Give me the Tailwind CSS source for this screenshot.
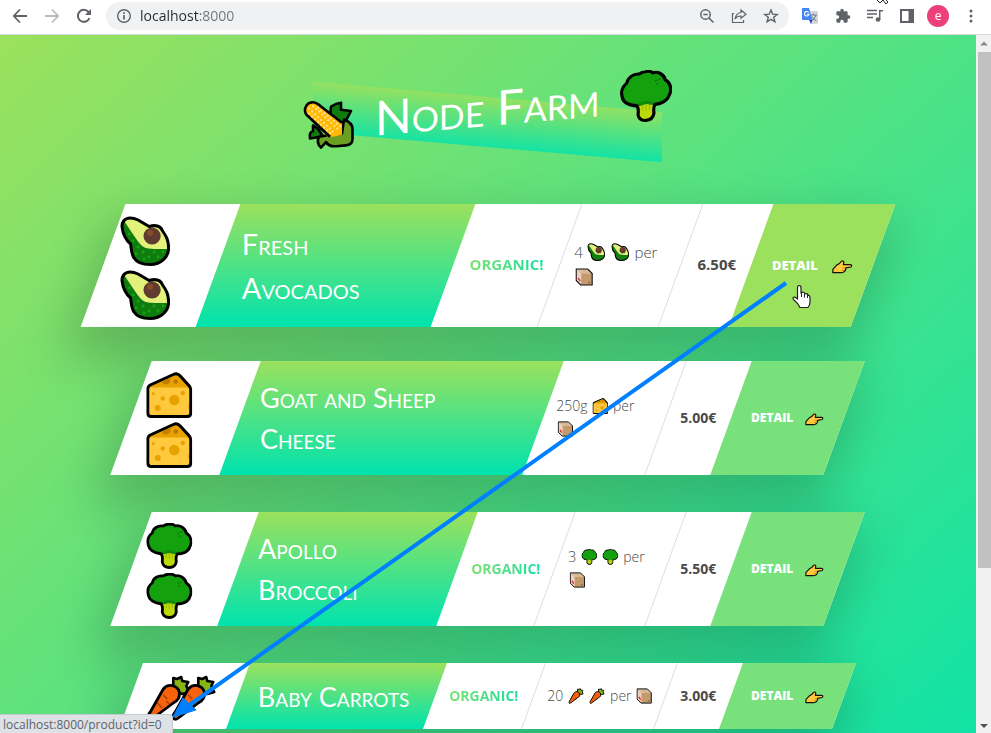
<!DOCTYPE html>
<html lang="en">
<head>
<meta charset="utf-8">
<meta name="viewport" content="width=device-width, initial-scale=1">
<title>Node Farm</title>
<script src="https://cdn.jsdelivr.net/npm/@tailwindcss/browser@4"></script>
</head>
<body class="relative flex h-screen flex-col overflow-hidden bg-white font-['Open_Sans',sans-serif] text-[#4a4a4a]">

<!-- Emoji artwork -->
<svg class="hidden" aria-hidden="true">
  <symbol id="avocado" viewBox="0 0 50 50">
    <path d="M10 2C4 2 1.500 7 2 11C3 20 7 25 10.500 28C11 30 11 38 14 42C17 47 23 48.500 30 48.500C41 48.500 48.500 41 48.500 32C48.500 24 46 20 42.500 15C40 9 34 9 29 10.500L18 4C15 2.500 13 2 10 2Z" fill="#e2f179"/>
    <path d="M4 5C11 15 17 25 21 29C25 33 28 33 48.500 33C48 42 41 48.500 30 48.500C23 48.500 17 47 14 42C11 38 11 30 10.500 28C7 25 3 20 2 11Z" fill="#107c10"/>
    <g fill="#16a70f"><circle cx="9" cy="18" r="1.400"/><circle cx="13" cy="25" r="1.400"/><circle cx="18" cy="31" r="1.400"/><circle cx="16" cy="38" r="1.400"/><circle cx="23" cy="36" r="1.400"/><circle cx="29" cy="41" r="1.400"/><circle cx="34" cy="36" r="1.400"/><circle cx="38" cy="41" r="1.400"/><circle cx="43" cy="36" r="1.400"/><circle cx="24" cy="43" r="1.400"/></g>
    <circle cx="32" cy="20" r="8.600" fill="#603b2f"/><circle cx="30" cy="17" r="3" fill="#8a4b25"/>
    <path d="M10 2C4 2 1.500 7 2 11C3 20 7 25 10.500 28C11 30 11 38 14 42C17 47 23 48.500 30 48.500C41 48.500 48.500 41 48.500 32C48.500 24 46 20 42.500 15C40 9 34 9 29 10.500L18 4C15 2.500 13 2 10 2Z" fill="none" stroke="#000" stroke-width="3" stroke-linejoin="round"/>
  </symbol>
  <symbol id="cheese" viewBox="0 0 46 46">
    <path d="M1.500 17Q1.500 14.500 4 13L27 2.500Q31 .500 34 4L43 14Q44.500 16 44.500 18V41Q44.500 44.500 41 44.500H5Q1.500 44.500 1.500 41Z" fill="#e8a200"/>
    <path d="M2 15.500H44V41Q44 44 41 44H5Q2 44 2 41Z" fill="#ffc83d"/>
    <g fill="#e8a200"><circle cx="28" cy="28" r="5.200"/><circle cx="16.500" cy="26.500" r="2.200"/><circle cx="11.500" cy="36" r="3"/><circle cx="7" cy="21.500" r="1.500"/><circle cx="36.500" cy="21" r="2.200"/><path d="M44 31a4 4 0 0 0 0 7Z"/></g>
    <circle cx="29.500" cy="9.500" r="2.200" fill="#b97500"/><path d="M16 9.500L24 6Q25 12 19 12.500Q16 12 16 9.500Z" fill="#c57d00"/>
    <path d="M1.500 17Q1.500 14.500 4 13L27 2.500Q31 .500 34 4L43 14Q44.500 16 44.500 18V41Q44.500 44.500 41 44.500H5Q1.500 44.500 1.500 41Z" fill="none" stroke="#000" stroke-width="3"/>
  </symbol>
  <symbol id="broccoli" viewBox="0 0 46 46">
    <path d="M14 27C17 33 16 35 16 39Q17 44.500 23 44.500Q29 44.500 30 39C30 35 29 33 32 27Z" fill="#bad80a"/>
    <path d="M20 31v4M23 30v6M26 31v4" stroke="#9cbc05" stroke-width="1"/>
    <path d="M17 3C20 .500 27 .500 29 3C33 1.500 39 5 40 10C45 13 46 20 43.500 24C42 29 36 31 31 30C29 33 27 30 23 30C19 30 17 33 15 30C9 30 3 28 2 22C.500 17 2 13 6 10C7 5 12 2 17 3Z" fill="#13a10e"/>
    <path d="M2 22C5 29 12 27 17 29C21 26 26 27 29 29C35 29 41 27 44 22C44 28 37 31 31 30C29 33 27 30 23 30C19 30 17 33 15 30C9 30 3 28 2 22Z" fill="#0f7c0f" opacity=".6"/>
    <path d="M31 10h2m-1 3h2m0-4h2m-1 5" stroke="#0b6b0b"/>
    <path d="M15 31C9 30 3 28 2 22C.500 17 2 13 6 10C7 5 12 2 17 3C20 .500 27 .500 29 3C33 1.500 39 5 40 10C45 13 46 20 43.500 24C42 29 36 31 31 31C29 34 30 36 30 39Q29 44.500 23 44.500Q17 44.500 16 39C16 36 17 34 15 31Z" fill="none" stroke="#000" stroke-width="2.800" stroke-linejoin="round"/>
  </symbol>
  <symbol id="corn" viewBox="0 0 52 50">
    <path d="M27 19L28 8Q33 5 38 5V12L48 14L43 23L25 31Z" fill="#107c10" stroke="#000" stroke-width="2.600" stroke-linejoin="round"/>
    <path d="M10 25L15 29L20 37L7 38Q6 31 10 31Z" fill="#107c10" stroke="#000" stroke-width="2.600" stroke-linejoin="round"/>
    <path d="M41 22Q50 26 49.500 33V43Q49 48 43 48H33Q26 48 23 43L18 48Q13 43 16 37L28 36L39 36Z" fill="#6b9f22" stroke="#000" stroke-width="2.600" stroke-linejoin="round"/>
    <path d="M25 38L3.500 14C0 9 3 2 9 2C13 2 15 4 18 7L39 25V37L33 38Z" fill="#ffb900"/>
    <path d="M27 38L3.500 14C0 9 3 2 9 2C13 2 15 4 18 7L39 25" fill="none" stroke="#000" stroke-width="2.600" stroke-linejoin="round"/>
    <g stroke="#ffdf8a" stroke-width="2.400" stroke-linecap="round" stroke-dasharray="0 4.300"><path d="M6 8L30 33"/><path d="M10 6L36 32"/><path d="M15 8L38 29"/><path d="M6 13L29 36"/></g>
  </symbol>
  <symbol id="carrot" viewBox="0 0 46 46">
    <path d="M27 12V3L31 4L35 2L36 6L42 7L40 11L43 17L36 19L31 17Z" fill="#86b517" stroke="#000" stroke-width="2.600" stroke-linejoin="round"/>
    <path d="M17 14C22 8 31 10 33 17C34 23 31 26 27 28L7 43Q3 46 2 42Q1.500 40 4 37Z" fill="#f7630c" stroke="#000" stroke-width="2.800" stroke-linejoin="round"/>
    <path d="M17 20l4 4m-10 4l5 5m4-7l3 3" stroke="#a74109" stroke-width="1.600"/>
  </symbol>
  <symbol id="box" viewBox="0 0 18 18">
    <path d="M1 1H12.500L17 5.500V17H5.500L1 12.500Z" fill="#c39a6b"/>
    <path d="M1 1H12.500L17 5.500H6Z" fill="#dcbc94"/><path d="M1 1L6 5.500V17L1 12.500Z" fill="#ecd0c0"/>
    <path d="M6 1h3l4 4.500h-2Z" fill="#cbb5a2"/><path d="M3 10l2 3" stroke="#e81224" stroke-width="1.300"/><path d="M13 15l2-1" stroke="#765126"/>
    <path d="M1 1H12.500L17 5.500V17H5.500L1 12.500Z" fill="none" stroke="#111" stroke-width="1.100"/>
  </symbol>
  <symbol id="point" viewBox="0 0 22 14">
    <path d="M1 13V9.500L5 5Q8 4 10 1Q12 0 12.500 2L12 4.500H19.500Q21.500 5 20 7L14.500 8Q15 11 12 12.500L10 13Z" fill="#ffc83d" stroke="#111" stroke-width="1.300" stroke-linejoin="round"/>
    <path d="M11 8h3M10 10.500h3" stroke="#b97800" stroke-width=".7"/>
  </symbol>
</svg>

<!-- Browser toolbar -->
<header class="flex h-[35px] shrink-0 items-center border-b border-[#d5d9df] bg-white pr-3 pb-[2px] pl-3 text-[#5f6368]">
  <nav class="flex items-center gap-4" aria-label="Browser">
    <button aria-label="Back"><svg class="size-4" viewBox="0 0 16 16" fill="none" stroke="currentColor" stroke-width="1.800"><path d="M15 8H2M8 1.500L1.800 8L8 14.500"/></svg></button>
    <button aria-label="Forward" class="text-[#babcbe]"><svg class="size-4" viewBox="0 0 16 16" fill="none" stroke="currentColor" stroke-width="1.800"><path d="M1 8H14M8 1.500L14.200 8L8 14.500"/></svg></button>
    <button aria-label="Reload"><svg class="size-4" viewBox="0 0 16 16" fill="none" stroke="currentColor" stroke-width="2"><path d="M13.500 10A6 6 0 1 1 12.500 4L14 5.500"/><path d="M15 1V7H9Z" fill="currentColor" stroke="none"/></svg></button>
  </nav>
  <div class="ml-[14px] flex h-7 flex-1 items-center rounded-full bg-[#eff1f3] pr-[10px] pl-[10px]">
    <svg class="mr-2 size-4 shrink-0" viewBox="0 0 16 16" fill="none" stroke="currentColor" stroke-width="1.400"><circle cx="8" cy="8" r="6.300"/><path d="M8 7V11.500M8 4.300V6" stroke-width="1.700"/></svg>
    <input aria-label="Address" value="localhost:8000" class="w-full min-w-0 flex-1 bg-linear-to-r from-[#27292c] from-[59px] to-[#70757a] to-[59px] bg-clip-text text-sm text-transparent outline-none">
    <span class="flex items-center gap-4">
      <button aria-label="Zoom"><svg class="size-4" viewBox="0 0 16 16" fill="none" stroke="currentColor" stroke-width="1.500"><circle cx="6.500" cy="6.500" r="4.700"/><path d="M10 10L14.500 14.500M4.300 6.500H8.700"/></svg></button>
      <button aria-label="Share"><svg class="size-4" viewBox="0 0 16 16" fill="none" stroke="currentColor" stroke-width="1.200"><path d="M3 5.500H1.500V14.500H12.500V12"/><path d="M10 2L15 6.200L10 10.300V8Q6 7.800 4 11Q5 5 10 4.500Z"/></svg></button>
      <button aria-label="Bookmark"><svg class="size-4" viewBox="0 0 16 16" fill="none" stroke="currentColor" stroke-width="1.400"><path d="M8 2L9.700 6.200L14.200 6.500L10.700 9.300L11.900 13.800L8 11.300L4.100 13.800L5.300 9.300L1.800 6.500L6.300 6.200Z"/></svg></button>
    </span>
  </div>
  <div class="ml-3 flex items-center gap-4">
    <button aria-label="Translate"><svg class="size-[18px]" viewBox="0 0 18 18"><path d="M7 4H16Q17 4 17 5V16Q17 17 16 17H10Z" fill="#d5d9dd"/><path d="M9 8h7M12.500 6.500V8M15 8Q14 12 10.500 14M11 9.500Q13 13 15.500 14" stroke="#6e7e92" fill="none"/><path d="M2 1H8L11.500 13H2Q1 13 1 12V2Q1 1 2 1Z" fill="#4385f5"/><path d="M8 13H11.500L10 17Z" fill="#3949b8"/><path d="M7.700 5.500A2.300 2.300 0 1 0 8 7.200H5.800" stroke="#fff" fill="none" stroke-width="1.100"/></svg></button>
    <button aria-label="Extensions"><svg class="size-4" viewBox="0 0 24 24" fill="currentColor"><path d="M20.500 11H19V7c0-1.100-.9-2-2-2h-4V3.500a2.500 2.500 0 0 0-5 0V5H4c-1.100 0-2 .9-2 2v3.800h1.500a2.700 2.700 0 0 1 0 5.400H2V20c0 1.100.9 2 2 2h3.800v-1.500a2.700 2.700 0 0 1 5.400 0V22H17c1.100 0 2-.9 2-2v-4h1.500a2.500 2.500 0 0 0 0-5z"/></svg></button>
    <button aria-label="Media"><svg class="size-4" viewBox="0 0 16 16" fill="none" stroke="currentColor" stroke-width="1.500"><path d="M0 2.500H10M0 6H10M0 9.500H6M12.700 12V2.700H16"/><circle cx="11" cy="11.500" r="2.300" fill="currentColor" stroke="none"/></svg></button>
    <button aria-label="Side panel"><svg class="size-4" viewBox="0 0 16 16"><path d="M1 1H15V15H1ZM3 3V13H9.500V3Z" fill="currentColor" fill-rule="evenodd"/></svg></button>
    <button aria-label="Profile" class="-mr-0.5 -ml-1 flex size-[22px] items-center justify-center rounded-full bg-[#ec407a] pb-px text-xs leading-none text-white">e</button>
    <button aria-label="Menu"><svg class="size-4" viewBox="0 0 16 16" fill="currentColor"><circle cx="8" cy="3" r="1.500"/><circle cx="8" cy="8" r="1.500"/><circle cx="8" cy="13" r="1.500"/></svg></button>
  </div>
</header>

<div class="flex min-h-0 flex-1">
  <div class="min-w-0 flex-1 overflow-hidden">
  <main class="min-h-[898px] bg-linear-to-br/srgb from-[#9be15d] to-[#00e3ae] pt-10 pr-[49px] pl-12">
    <div class="relative mx-auto w-fit">
      <div class="absolute inset-x-[10px] top-[22px] h-[50px] skew-y-[5deg] bg-linear-to-b/srgb from-[#9be15d] to-[#00e3ae] opacity-80"></div>
      <h1 class="relative flex h-[70px] -skew-y-[5deg] items-center gap-5 font-['Lato',sans-serif] text-[48px] leading-none font-normal whitespace-nowrap text-white [font-variant-caps:small-caps]">
        <svg class="h-[50px] w-[52px]"><use href="#corn"/></svg>
        <span class="pb-1">Node Farm</span>
        <svg class="size-[52px]"><use href="#broccoli"/></svg>
      </h1>
    </div>

    <div class="mt-[59px] flex flex-col items-center gap-[37px]">
      <!-- Highlighted product -->
      <article class="-mb-[3px] grid min-h-[123px] w-full max-w-[770px] -skew-x-[20deg] grid-cols-[115fr_235fr_107fr_121fr_70fr_122fr] bg-white shadow-[0_24px_48px_8px_rgba(0,0,0,0.2)]">
        <div class="flex items-center pt-1 pl-[18px]"><div class="flex skew-x-[20deg] flex-col gap-1"><svg class="size-[50px]"><use href="#avocado"/></svg><svg class="size-[50px]"><use href="#avocado"/></svg></div></div>
        <div class="flex items-center bg-linear-to-b/srgb from-[#9be15d] to-[#00e3ae] pl-6"><h2 class="skew-x-[20deg] font-['Lato',sans-serif] text-[29px] leading-[44px] font-normal text-white [font-variant-caps:small-caps]">Fresh<br>Avocados</h2></div>
        <div class="flex items-center justify-center border-r border-[#ddd] pb-[2px]"><p class="skew-x-[20deg] bg-linear-to-r/srgb from-[#7ee071] to-[#1edfa0] bg-clip-text text-[15px] font-bold text-transparent">ORGANIC!</p></div>
        <div class="flex items-center border-r border-[#ddd] pb-[2px] pl-[14px]"><p class="skew-x-[20deg] text-[15px] leading-[25px] font-light whitespace-nowrap">4 <svg class="mx-px inline size-[18px] align-[-3px]"><use href="#avocado"/></svg> <svg class="mx-px inline size-[18px] align-[-3px]"><use href="#avocado"/></svg> per<br><svg class="mx-px inline size-[18px] align-[-3px]"><use href="#box"/></svg></p></div>
        <div class="flex items-center justify-center pb-[2px]"><p class="skew-x-[20deg] text-[15px] font-bold">6.50€</p></div>
        <a href="/product?id=0" class="flex items-center justify-center bg-[#9be15d]"><span class="flex skew-x-[20deg] items-center gap-[14px] text-[13px] font-extrabold text-white uppercase">Detail <svg class="mt-[2px] h-[14px] w-[21px]"><use href="#point"/></svg></span></a>
      </article>

      <article class="grid min-h-[114px] w-full max-w-[713px] -skew-x-[20deg] grid-cols-[109fr_303fr_123fr_65fr_113fr] bg-white shadow-[0_24px_48px_8px_rgba(0,0,0,0.2)]">
        <div class="flex items-center pt-1 pl-4"><div class="flex skew-x-[20deg] flex-col gap-1"><svg class="size-[46px]"><use href="#cheese"/></svg><svg class="size-[46px]"><use href="#cheese"/></svg></div></div>
        <div class="flex items-center bg-linear-to-b/srgb from-[#9be15d] to-[#00e3ae] pl-5"><h2 class="skew-x-[20deg] font-['Lato',sans-serif] text-[27px] leading-[41px] font-normal text-white [font-variant-caps:small-caps]">Goat and Sheep<br>Cheese</h2></div>
        <div class="flex items-center border-r border-[#ddd] pb-[2px] pl-[13px]"><p class="skew-x-[20deg] text-[14px] leading-[23px] font-light whitespace-nowrap">250g <svg class="mx-px inline size-4 align-[-3px]"><use href="#cheese"/></svg> per<br><svg class="mx-px inline size-4 align-[-3px]"><use href="#box"/></svg></p></div>
        <div class="flex items-center justify-center pb-[2px]"><p class="skew-x-[20deg] text-[14px] font-bold">5.00€</p></div>
        <a href="/product?id=1" class="flex items-center justify-center bg-[#79e17b]"><span class="flex skew-x-[20deg] items-center gap-3 text-[12px] font-extrabold text-white uppercase">Detail <svg class="mt-[2px] h-[13px] w-[19px]"><use href="#point"/></svg></span></a>
      </article>

      <article class="grid min-h-[114px] w-full max-w-[713px] -skew-x-[20deg] grid-cols-[107fr_219fr_98fr_111fr_65fr_113fr] bg-white shadow-[0_24px_48px_8px_rgba(0,0,0,0.2)]">
        <div class="flex items-center pt-1 pl-4"><div class="flex skew-x-[20deg] flex-col gap-1"><svg class="size-[46px]"><use href="#broccoli"/></svg><svg class="size-[46px]"><use href="#broccoli"/></svg></div></div>
        <div class="flex items-center bg-linear-to-b/srgb from-[#9be15d] to-[#00e3ae] pl-5"><h2 class="skew-x-[20deg] font-['Lato',sans-serif] text-[27px] leading-[41px] font-normal text-white [font-variant-caps:small-caps]">Apollo<br>Broccoli</h2></div>
        <div class="flex items-center justify-center border-r border-[#ddd] pb-[2px]"><p class="skew-x-[20deg] bg-linear-to-r/srgb from-[#7ee071] to-[#1edfa0] bg-clip-text text-[14px] font-bold text-transparent">ORGANIC!</p></div>
        <div class="flex items-center border-r border-[#ddd] pb-[2px] pl-[13px]"><p class="skew-x-[20deg] text-[14px] leading-[23px] font-light whitespace-nowrap">3 <svg class="mx-px inline size-4 align-[-3px]"><use href="#broccoli"/></svg> <svg class="mx-px inline size-4 align-[-3px]"><use href="#broccoli"/></svg> per<br><svg class="mx-px inline size-4 align-[-3px]"><use href="#box"/></svg></p></div>
        <div class="flex items-center justify-center pb-[2px]"><p class="skew-x-[20deg] text-[14px] font-bold">5.50€</p></div>
        <a href="/product?id=2" class="flex items-center justify-center bg-[#79e17b]"><span class="flex skew-x-[20deg] items-center gap-3 text-[12px] font-extrabold text-white uppercase">Detail <svg class="mt-[2px] h-[13px] w-[19px]"><use href="#point"/></svg></span></a>
      </article>

      <article class="grid min-h-[66px] w-full max-w-[713px] -skew-x-[20deg] grid-cols-[107fr_197fr_99fr_132fr_65fr_113fr] bg-white shadow-[0_24px_48px_8px_rgba(0,0,0,0.2)]">
        <div class="flex items-center pt-1 pl-4"><div class="flex skew-x-[20deg]"><svg class="size-[46px]"><use href="#carrot"/></svg><svg class="-ml-[21px] size-[46px]"><use href="#carrot"/></svg></div></div>
        <div class="flex items-center bg-linear-to-b/srgb from-[#9be15d] to-[#00e3ae] pl-5"><h2 class="skew-x-[20deg] font-['Lato',sans-serif] text-[27px] leading-[41px] font-normal whitespace-nowrap text-white [font-variant-caps:small-caps]">Baby Carrots</h2></div>
        <div class="flex items-center justify-center border-r border-[#ddd] pb-[2px]"><p class="skew-x-[20deg] bg-linear-to-r/srgb from-[#7ee071] to-[#1edfa0] bg-clip-text text-[14px] font-bold text-transparent">ORGANIC!</p></div>
        <div class="flex items-center border-r border-[#ddd] pb-[2px] pl-[13px]"><p class="skew-x-[20deg] text-[14px] leading-[23px] font-light whitespace-nowrap">20 <svg class="mx-px inline size-4 align-[-3px]"><use href="#carrot"/></svg> <svg class="mx-px inline size-4 align-[-3px]"><use href="#carrot"/></svg> per <svg class="mx-px inline size-4 align-[-3px]"><use href="#box"/></svg></p></div>
        <div class="flex items-center justify-center pb-[2px]"><p class="skew-x-[20deg] text-[14px] font-bold">3.00€</p></div>
        <a href="/product?id=3" class="flex items-center justify-center bg-[#79e17b]"><span class="flex skew-x-[20deg] items-center gap-3 text-[12px] font-extrabold text-white uppercase">Detail <svg class="mt-[2px] h-[13px] w-[19px]"><use href="#point"/></svg></span></a>
      </article>
    </div>
  </main>
  </div>

  <!-- Scrollbar -->
  <div class="flex w-[15px] shrink-0 flex-col items-center bg-[#f1f1f1]" aria-hidden="true">
    <svg class="h-[17px] w-[15px] shrink-0" viewBox="0 0 15 17"><path d="M4 10.500L8 6.500L12 10.500Z" fill="#8a8a8a"/></svg>
    <div class="ml-[2px] w-[13px] flex-[516] bg-[#c1c1c1]"></div>
    <div class="flex-[148]"></div>
    <svg class="h-[17px] w-[15px] shrink-0" viewBox="0 0 15 17"><path d="M4 8L8 12L12 8Z" fill="#505050"/></svg>
  </div>
</div>

<!-- Link status bubble -->
<p class="absolute bottom-0 left-0 h-[19px] rounded-tr-sm border-t border-r border-[#c5cad0] bg-[#dee1e6] pr-[10px] pl-[3px] text-xs leading-[20px] text-[#5f6368]">localhost:8000/product?id=0</p>

<!-- Arrow and pointers drawn over the page -->
<svg class="pointer-events-none absolute top-0 left-0 h-[733px] w-[991px]" viewBox="0 0 991 733" aria-hidden="true">
  <path d="M786 283L188 706" stroke="#0080ff" stroke-width="4"/>
  <path d="M173 717L183 698L196 710Z" fill="#0080ff" stroke="#0080ff"/>
  <path d="M797.500 288Q797.500 285.500 799.300 285.500Q801 285.500 801 288V293Q804 291 805 294Q808 293 808 295.500Q810 295 810 298V302Q810 305 808 307.500H800Q798 303 793.500 299.500Q792 297 795 297L797.500 299Z" fill="#fff" stroke="#222" stroke-width="1.200" stroke-linejoin="round"/>
  <path d="M801.500 293V297M804.500 294V297.500M807.500 295V298" stroke="#222"/>
  <path d="M877 0L880 3L883 0L886 4L888 2L886 0" fill="#fff" stroke="#222"/>
</svg>
</body>
</html>
